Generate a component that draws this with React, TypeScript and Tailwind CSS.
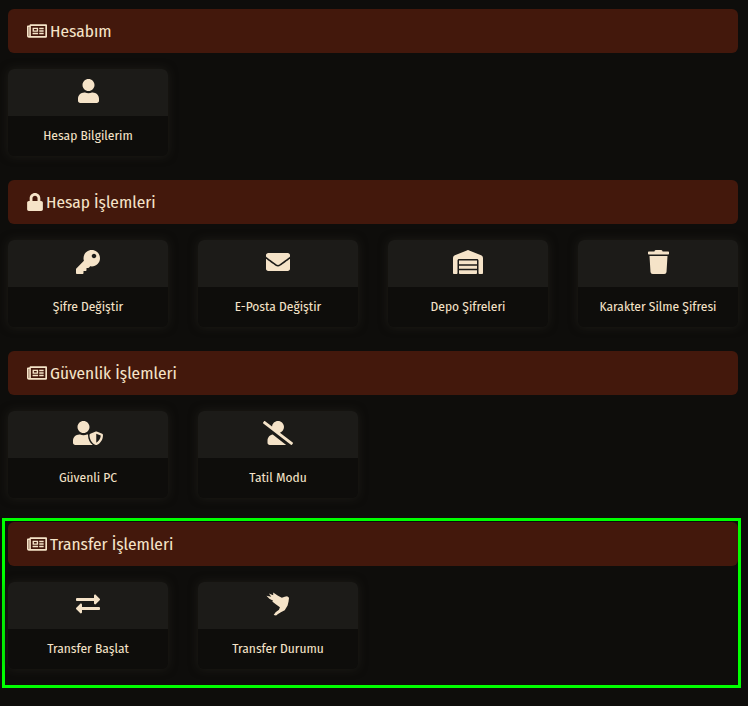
import React from "react";
import {
  FaEnvelope,
  FaExchangeAlt,
  FaKey,
  FaLock,
  FaRegNewspaper,
  FaTrash,
  FaUser,
  FaUserShield,
  FaUserSlash,
} from "react-icons/fa";
import { FaWarehouse } from "react-icons/fa6";
import { IconType } from "react-icons";

type Item = { label: string; icon: IconType; size: string };

// swallow-like bird used for "Transfer Durumu", not in the icon packs
const Bird: IconType = ({ className }) => (
  <svg viewBox="0 0 24 25" className={className} fill="currentColor">
    <path d="M0 4 L5 5 L2.5 1.5 L7 3.5 L7 .5 L12 4 L16 6 L19 5 L21.5 4.5 L23.5 6 L23 10 L22 14 L19 19 L15 21 L12 23 L10 24.5 L7.5 24 L9.5 21 L13 18.5 L14 16 L10 13 L6 10 L7 9 L3 7 Z" />
  </svg>
);

const Card = ({ label, icon: Icon, size }: Item) => (
  <div className="w-[160px] h-[87px] rounded-md overflow-hidden shadow-[0_0_10px_rgba(40,38,32,0.6)] bg-[#0e0d0b]">
    <div className="h-[47px] bg-[#1c1b18] flex items-start justify-center pt-[10px]">
      <Icon className={`${size} text-[#f5e3c8]`} />
    </div>
    <div className="h-[40px] flex items-center justify-center text-[13.4px] text-[#f5e3c8]">
      {label}
    </div>
  </div>
);

const Section = ({
  title,
  icon: Icon,
  iconSize,
  items,
}: {
  title: string;
  icon: IconType;
  iconSize: string;
  items: Item[];
}) => (
  <div className="flex flex-col gap-4">
    <div className="h-[44px] rounded-md bg-[#43180c] flex items-center gap-[3px] pl-[19px] text-[17.3px] text-[#f5e3c8]">
      <Icon className={iconSize} />
      <span className="pt-[2px]">{title}</span>
    </div>
    <div className="flex gap-[30px]">
      {items.map((item) => (
        <Card key={item.label} {...item} />
      ))}
    </div>
  </div>
);

const news = "h-[18px] w-[20px]";

export default function App() {
  return (
    <div className="w-[748px] h-[706px] bg-[#0e0d0b] pt-[9px] font-['Fira_Sans_Condensed','Fira_Sans','Noto_Sans',sans-serif]">
      <div className="flex flex-col gap-6 pl-2 w-[738px]">
        <Section
          title="Hesabım"
          icon={FaRegNewspaper}
          iconSize={news}
          items={[{ label: "Hesap Bilgilerim", icon: FaUser, size: "h-[24px] w-[21px]" }]}
        />
        <Section
          title="Hesap İşlemleri"
          icon={FaLock}
          iconSize="h-[18px] w-[16px]"
          items={[
            { label: "Şifre Değiştir", icon: FaKey, size: "h-[24px] w-[24px]" },
            { label: "E-Posta Değiştir", icon: FaEnvelope, size: "h-[24px] w-[24px]" },
            { label: "Depo Şifreleri", icon: FaWarehouse, size: "h-[24px] w-[30px]" },
            { label: "Karakter Silme Şifresi", icon: FaTrash, size: "h-[24px] w-[21px]" },
          ]}
        />
        <Section
          title="Güvenlik İşlemleri"
          icon={FaRegNewspaper}
          iconSize={news}
          items={[
            { label: "Güvenli PC", icon: FaUserShield, size: "h-[24px] w-[30px]" },
            { label: "Tatil Modu", icon: FaUserSlash, size: "h-[24px] w-[30px]" },
          ]}
        />
      </div>
      <div className="ml-[2px] mt-[20px] w-[739px] border-[3px] border-[#00ff00] pt-px pl-[3px] pb-4">
        <Section
          title="Transfer İşlemleri"
          icon={FaRegNewspaper}
          iconSize={news}
          items={[
            { label: "Transfer Başlat", icon: FaExchangeAlt, size: "h-[24px] w-[24px]" },
            { label: "Transfer Durumu", icon: Bird, size: "h-[24px] w-[24px]" },
          ]}
        />
      </div>
    </div>
  );
}
